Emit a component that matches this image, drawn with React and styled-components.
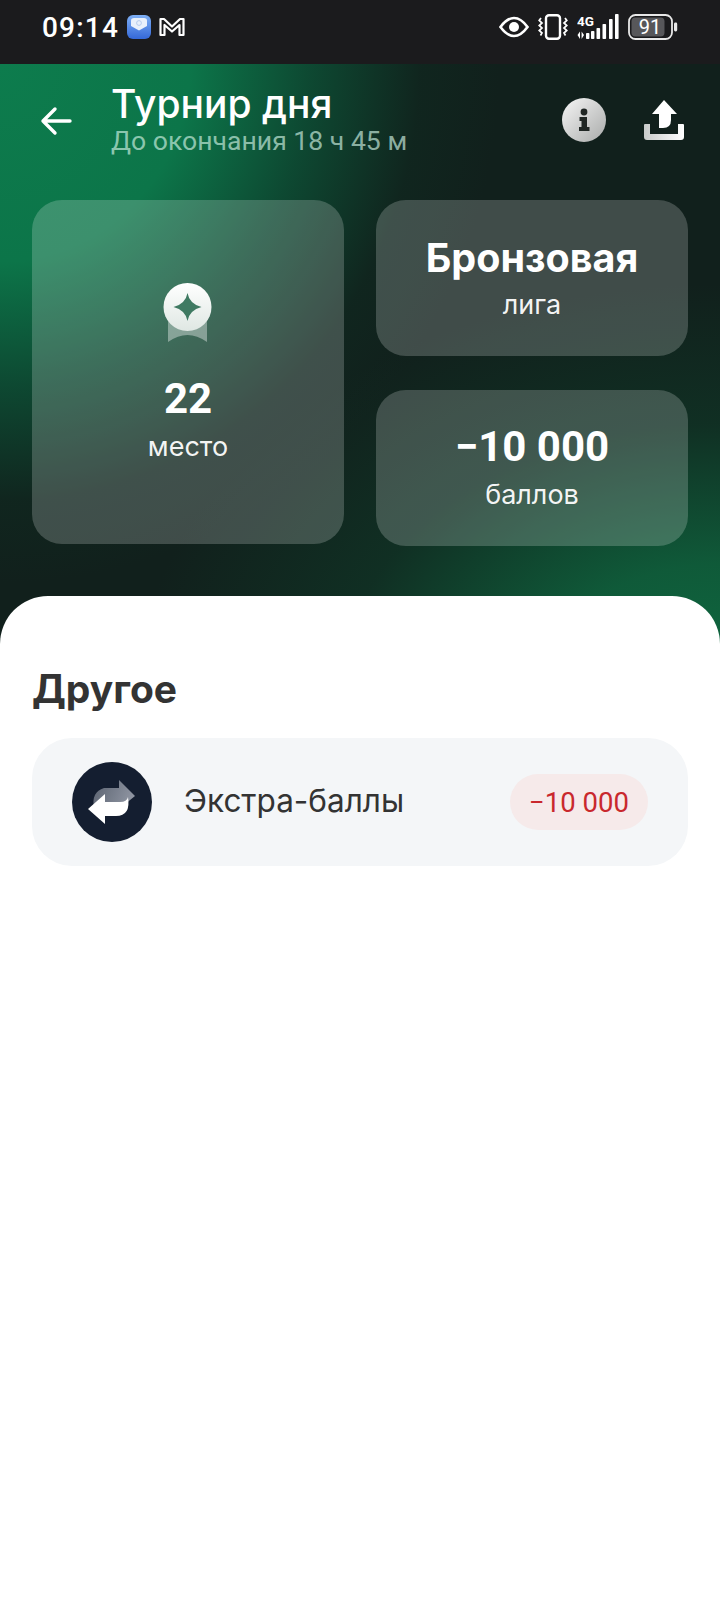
import React from "react";
import styled, { createGlobalStyle } from "styled-components";

const Global = createGlobalStyle`
  html, body { margin: 0; padding: 0; background: #fff; }
  * { box-sizing: border-box; }
  body { font-family: "Inter", "Noto Sans", sans-serif; }
`;

const Page = styled.div`
  width: 720px;
  min-height: 1612px;
  background: #fff;
  display: flex;
  flex-direction: column;
`;

const StatusBar = styled.div`
  height: 64px;
  flex: none;
  background: #1b1b1d;
  display: flex;
  align-items: center;
  padding: 0 42px 10px 42px;
  color: #fff;
`;

const Time = styled.span`
  font-family: "Roboto", sans-serif;
  font-size: 28px;
  font-weight: 500;
  letter-spacing: 1.2px;
`;

const StatusLeft = styled.div`
  display: flex;
  align-items: center;
  gap: 8px;
`;

const StatusRight = styled.div`
  margin-left: auto;
  display: flex;
  align-items: center;
  gap: 9px;
`;

const Hero = styled.div`
  flex: none;
  height: 580px;
  padding: 0 32px;
  background:
    radial-gradient(ellipse 580px 400px at 720px 620px, #0f6a41 0%, rgba(15,100,62,.85) 30%, rgba(15,70,46,.4) 65%, rgba(15,60,40,0) 100%),
    radial-gradient(ellipse 500px 520px at 0px 0px, #0d7c4d 0%, #0c7549 38%, rgba(12,88,58,.72) 62%, rgba(14,50,36,.3) 84%, rgba(14,40,30,0) 100%),
    #11201c;
`;

const Toolbar = styled.div`
  height: 136px;
  display: flex;
  align-items: flex-start;
`;

const BackButton = styled.div`
  width: 79px;
  padding: 42px 0 0 8px;
  flex: none;
`;

const Titles = styled.div`
  flex: 1;
  padding-top: 18px;
  color: #fff;
`;

const Title = styled.div`
  font-size: 39px;
  line-height: 44px;
  font-weight: 500;
`;

const Subtitle = styled.div`
  font-family: "Roboto", sans-serif;
  font-size: 26.6px;
  line-height: 30px;
  color: rgba(205, 240, 225, 0.68);
`;

const Actions = styled.div`
  display: flex;
  align-items: center;
  gap: 38px;
  padding: 34px 4px 0 0;
`;

const Grid = styled.div`
  display: grid;
  grid-template-columns: 312px 312px;
  grid-template-rows: 156px 156px;
  column-gap: 32px;
  row-gap: 34px;
`;

const Card = styled.div`
  border-radius: 30px;
  background: rgba(255, 255, 255, 0.2);
  color: #fff;
  display: flex;
  flex-direction: column;
  align-items: center;
  justify-content: center;
`;

const TallCard = styled(Card)`
  grid-row: 1 / 3;
  margin-bottom: 2px;
  justify-content: flex-start;
  padding-top: 83px;
`;

const Medal = styled.div`
  height: 60px;
  margin-bottom: 34px;
`;

const Value = styled.div`
  font-size: 39.5px;
  line-height: 46px;
  font-weight: 700;
`;

const Figure = styled.div`
  font-family: "Roboto", sans-serif;
  font-size: 42px;
  line-height: 46px;
  font-weight: 700;
  margin: -1px 0 1px;
`;

const Label = styled.div`
  font-size: 27px;
  line-height: 34px;
  margin-top: 7px;
  color: rgba(255, 255, 255, 0.95);
`;

const Sheet = styled.div`
  flex: 1;
  margin-top: -48px;
  background: #fff;
  border-radius: 48px 48px 0 0;
  padding: 70px 32px 0;
  position: relative;
`;

const SectionTitle = styled.h2`
  margin: 0 0 26px;
  font-size: 39px;
  line-height: 46px;
  font-weight: 700;
  color: #333;
`;

const Row = styled.div`
  height: 128px;
  border-radius: 40px;
  background: #f4f6f8;
  display: flex;
  align-items: center;
  padding: 0 40px;
`;

const RowIcon = styled.div`
  width: 80px;
  height: 80px;
  border-radius: 50%;
  background: #141e30;
  flex: none;
  display: flex;
  align-items: center;
  justify-content: center;
`;

const RowLabel = styled.div`
  flex: 1;
  margin-left: 32px;
  padding-bottom: 3px;
  font-size: 31.5px;
  color: #333;
`;

const Badge = styled.div`
  width: 138px;
  height: 56px;
  border-radius: 28px;
  background: #f6eaea;
  color: #c9282d;
  font-family: "Roboto", sans-serif;
  font-size: 27.5px;
  font-weight: 400;
  display: flex;
  align-items: center;
  justify-content: center;
`;

const MailIcon = () => (
  <svg width="24" height="26" viewBox="0 0 24 26">
    <defs>
      <linearGradient id="mailg" x1="0" y1="0" x2="0" y2="1">
        <stop offset="0" stopColor="#7fb0f5" />
        <stop offset="1" stopColor="#3468d8" />
      </linearGradient>
    </defs>
    <rect x="0" y="1" width="24" height="24" rx="6" fill="url(#mailg)" />
    <path d="M4 6.5Q4 4 7 4H17Q20 4 20 6.5V12L12 16.5L4 12Z" fill="#e9f0fb" />
    <circle cx="12" cy="9" r="2.4" fill="none" stroke="#a9c3ea" strokeWidth="0.8" />
  </svg>
);

const MIcon = () => (
  <svg width="26" height="20" viewBox="0 0 26 20" fill="none" stroke="#fff" strokeWidth="2.2" strokeLinejoin="round">
    <path d="M1.5 18V2H5L13 9.5L21 2H24.5V18H20.5V8L13 14.5L5.5 8V18Z" />
  </svg>
);

const EyeIcon = () => (
  <svg width="30" height="22" viewBox="0 0 30 22">
    <path d="M1.5 11Q8 2 15 2T28.5 11Q22 20 15 20T1.5 11Z" fill="none" stroke="#fff" strokeWidth="2.6" />
    <circle cx="15" cy="11" r="5" fill="#fff" />
  </svg>
);

const VibrateIcon = () => (
  <svg width="30" height="26" viewBox="0 0 30 26" fill="none" stroke="#fff">
    <rect x="8" y="1.2" width="14" height="23.6" rx="3" strokeWidth="2.4" />
    <path d="M3 4L1.2 6.5L4 9L1.2 11.5L4 14L1.2 16.5L4 19L2.5 21.5" strokeWidth="1.7" />
    <path d="M27 4L28.8 6.5L26 9L28.8 11.5L26 14L28.8 16.5L26 19L27.5 21.5" strokeWidth="1.7" />
  </svg>
);

const SignalIcon = () => (
  <svg width="42" height="26" viewBox="0 0 42 26" fill="#fff">
    <text x="0" y="11.5" fontFamily="Roboto, sans-serif" fontWeight="700" fontSize="13.5">4G</text>
    <path d="M3 25V17.5L0.5 21Z M4.600 17.500V25L7 21Z" />
    <rect x="9" y="19" width="3.4" height="6" rx="0.8" />
    <rect x="14" y="17" width="3.4" height="8" rx="0.8" />
    <rect x="19.500" y="14" width="3.6" height="11" rx="0.8" />
    <rect x="25.500" y="10" width="3.6" height="15" rx="0.8" />
    <rect x="32" y="5" width="3.6" height="20" rx="0.8" />
    <rect x="38" y="0" width="3.6" height="25" rx="0.8" />
  </svg>
);

const BatteryIcon = () => (
  <svg width="50" height="26" viewBox="0 0 50 26">
    <rect x="1" y="1" width="43" height="24" rx="6.5" fill="none" stroke="#e8e8e8" strokeWidth="1.8" />
    <rect x="3.5" y="3.5" width="33" height="19" rx="4" fill="#57575a" />
    <rect x="46" y="8.5" width="3.2" height="9" rx="1.4" fill="#e8e8e8" />
    <text x="22" y="20" textAnchor="middle" fontFamily="Roboto, sans-serif" fontSize="20" fill="#fff">91</text>
  </svg>
);

const BackIcon = () => (
  <svg width="32" height="30" viewBox="0 0 32 30" fill="none" stroke="#fff" strokeWidth="3.4" strokeLinecap="round" strokeLinejoin="round">
    <path d="M30 15H3M15 3L3 15L15 27" />
  </svg>
);

const InfoIcon = () => (
  <svg width="44" height="44" viewBox="0 0 44 44">
    <defs>
      <linearGradient id="infog" x1="0" y1="0" x2="1" y2="1">
        <stop offset="0" stopColor="#f6f6f6" />
        <stop offset="1" stopColor="#a9abaa" />
      </linearGradient>
    </defs>
    <circle cx="22" cy="22" r="22" fill="url(#infog)" />
    <path d="M17.5 19H25V29H27.5V33H17V29H19.5V23H17.5Z" fill="#202624" />
    <circle cx="22" cy="14" r="3.4" fill="#202624" />
  </svg>
);

const ShareIcon = () => (
  <svg width="40" height="40" viewBox="0 0 40 40">
    <defs>
      <linearGradient id="trayg" x1="0" y1="0" x2="1" y2="0">
        <stop offset="0" stopColor="#c9cbca" />
        <stop offset="1" stopColor="#fff" />
      </linearGradient>
    </defs>
    <path d="M0 25Q0 24 1 24H6V34H34V24H39Q40 24 40 25V37Q40 40 37 40H3Q0 40 0 37Z" fill="url(#trayg)" />
    <path d="M20 0L33 14H27V20Q27 28 19 28H15V14H8Z" fill="#fff" />
  </svg>
);

const MedalIcon = () => (
  <svg width="50" height="60" viewBox="0 0 50 60">
    <defs>
      <linearGradient id="medalg" x1="0" y1="0" x2="0" y2="1">
        <stop offset="0" stopColor="#fff" />
        <stop offset="1" stopColor="#dfe7e3" />
      </linearGradient>
    </defs>
    <path d="M5 30H44V59Q34 52 24.500 52Q15 52 5 59Z" fill="rgba(255,255,255,.38)" />
    <circle cx="24.500" cy="24" r="24" fill="url(#medalg)" />
    <path d="M24.500 10Q26.500 21 38.500 24Q26.500 27 24.500 38Q22.500 27 10.500 24Q22.500 21 24.500 10Z" fill="#3f7a62" />
  </svg>
);

const SwapIcon = () => (
  <svg width="48" height="44" viewBox="0 0 48 44">
    <defs>
      <linearGradient id="swapg" x1="0" y1="0" x2="1" y2="0.3">
        <stop offset="0" stopColor="#5a6270" />
        <stop offset="1" stopColor="#8d93a0" />
      </linearGradient>
    </defs>
    <path d="M31 0L47 16L31 29V22H16Q7 22 6 28Q3 12 16 8H31Z" fill="url(#swapg)" />
    <path d="M17 14V22H32Q39 22 40 17Q43 36 28 36H17V44L0 29Z" fill="#fff" />
  </svg>
);

export default function App() {
  return (
    <Page>
      <Global />
      <StatusBar>
        <StatusLeft>
          <Time>09:14</Time>
          <MailIcon />
          <MIcon />
        </StatusLeft>
        <StatusRight>
          <EyeIcon />
          <VibrateIcon />
          <SignalIcon />
          <BatteryIcon />
        </StatusRight>
      </StatusBar>
      <Hero>
        <Toolbar>
          <BackButton>
            <BackIcon />
          </BackButton>
          <Titles>
            <Title>Турнир дня</Title>
            <Subtitle>До окончания 18 ч 45 м</Subtitle>
          </Titles>
          <Actions>
            <InfoIcon />
            <ShareIcon />
          </Actions>
        </Toolbar>
        <Grid>
          <TallCard>
            <Medal>
              <MedalIcon />
            </Medal>
            <Figure>22</Figure>
            <Label>место</Label>
          </TallCard>
          <Card>
            <Value>Бронзовая</Value>
            <Label>лига</Label>
          </Card>
          <Card>
            <Figure>−10 000</Figure>
            <Label>баллов</Label>
          </Card>
        </Grid>
      </Hero>
      <Sheet>
        <SectionTitle>Другое</SectionTitle>
        <Row>
          <RowIcon>
            <SwapIcon />
          </RowIcon>
          <RowLabel>Экстра-баллы</RowLabel>
          <Badge>−10 000</Badge>
        </Row>
      </Sheet>
    </Page>
  );
}
